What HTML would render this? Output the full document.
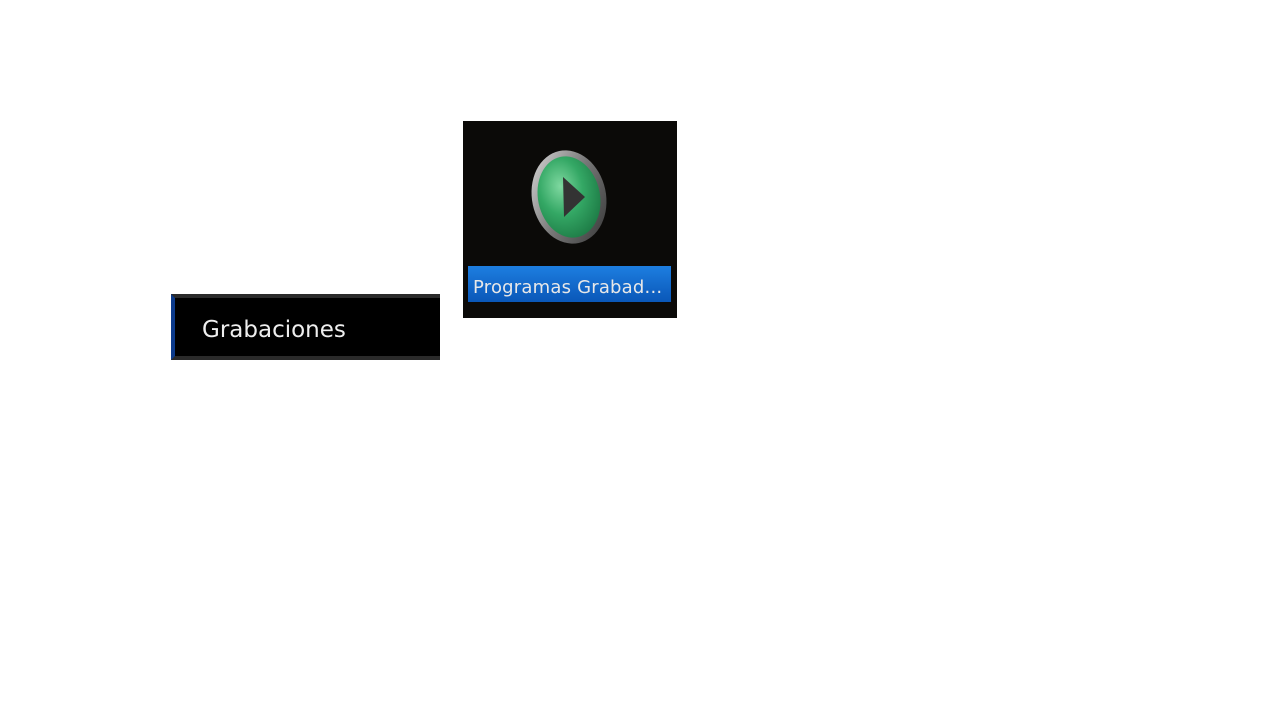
<!DOCTYPE html>
<html><head><style>
body{margin:0;width:1280px;height:720px;background:#fff;position:relative;overflow:hidden;font-family:"DejaVu Sans","Liberation Sans",sans-serif}
.box{position:absolute;left:171px;top:294px;width:265px;height:58px;background:#000;border-left:4px solid #0c3a8a;border-top:4px solid #2a2a2a;border-bottom:4px solid #2a2a2a}
.box span{position:absolute;left:27px;top:19px;color:#eee;font-size:23px}
.tile{position:absolute;left:463px;top:121px;width:214px;height:197px;background:#0b0a08}
.lab{position:absolute;left:5px;top:145px;width:203px;height:36px;background:linear-gradient(#1d7ee0,#0a57b8);color:#e8e8e8;font-size:18px;line-height:44px;padding-left:5px;box-sizing:border-box;letter-spacing:0.2px;white-space:nowrap;overflow:hidden}
</style></head><body>
<div class="box"><span>Grabaciones</span></div>
<div class="tile">
<svg width="214" height="140" style="position:absolute;left:0;top:0">
<defs>
<radialGradient id="g" cx="0.4" cy="0.35" r="0.7"><stop offset="0" stop-color="#7fd8a0"/><stop offset="0.5" stop-color="#34a865"/><stop offset="1" stop-color="#1d7a45"/></radialGradient>
<linearGradient id="r" x1="0" y1="0" x2="1" y2="1"><stop offset="0" stop-color="#ddd"/><stop offset="0.5" stop-color="#777"/><stop offset="1" stop-color="#333"/></linearGradient>
</defs>
<g transform="rotate(-12 106 76)">
<ellipse cx="106" cy="76" rx="37" ry="47" fill="url(#r)"/>
<ellipse cx="106" cy="76" rx="31" ry="41" fill="url(#g)"/>
</g>
<path d="M100 56 L122 76 L101 96 Z" fill="#333"/>
</svg>
<div class="lab">Programas Grabad...</div>
</div>
</body></html>
